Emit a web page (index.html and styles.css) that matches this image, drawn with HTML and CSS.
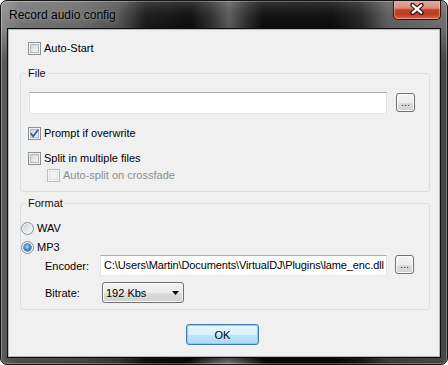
FILE: index.html
```html
<!DOCTYPE html>
<html>
<head>
<meta charset="utf-8">
<title>Record audio config</title>
<link rel="stylesheet" href="styles.css">
</head>
<body>
<div class="window">
  <div class="titlebar">
    <span class="title">Record audio config</span>
    <div class="close">
      <svg width="14" height="12" viewBox="0 0 14 12">
        <path d="M2.5 2 L11.5 10 M11.5 2 L2.5 10" stroke="#3a1208" stroke-width="4.4" stroke-linecap="round" fill="none"/>
        <path d="M2.8 2.3 L11.2 9.7 M11.2 2.3 L2.8 9.7" stroke="#ffffff" stroke-width="2.4" stroke-linecap="round" fill="none"/>
      </svg>
    </div>
  </div>
  <div class="client">
    <label class="check row-autostart"><span class="cb"></span><span>Auto-Start</span></label>

    <fieldset class="group group-file">
      <legend>File</legend>
      <div class="file-row">
        <div class="textbox file-box"></div>
        <button class="dots">...</button>
      </div>
      <label class="check row-prompt"><span class="cb"><svg width="11" height="11" viewBox="0 0 11 11"><path d="M1.8 5.2 L4.2 8.2 L9.2 1.8" stroke="#3b5ba6" stroke-width="1.8" fill="none"/></svg></span><span>Prompt if overwrite</span></label>
      <label class="check row-split"><span class="cb"></span><span>Split in multiple files</span></label>
      <label class="check row-auto disabled"><span class="cb dis"></span><span>Auto-split on crossfade</span></label>
    </fieldset>

    <fieldset class="group group-format">
      <legend>Format</legend>
      <label class="check row-wav"><span class="rb"></span><span>WAV</span></label>
      <label class="check row-mp3"><span class="rb on"></span><span>MP3</span></label>
      <div class="field-row enc-row">
        <span class="field-label">Encoder:</span>
        <div class="textbox enc-box">C:\Users\Martin\Documents\VirtualDJ\Plugins\lame_enc.dll</div>
        <button class="dots">...</button>
      </div>
      <div class="field-row bit-row">
        <span class="field-label">Bitrate:</span>
        <div class="combo"><span>192 Kbs</span><svg width="7" height="4" viewBox="0 0 7 4"><polygon points="0,0 7,0 3.5,4" fill="#000"/></svg></div>
      </div>
    </fieldset>

    <div class="actions"><button class="ok">OK</button></div>
  </div>
</div>
</body>
</html>
```

FILE: styles.css
```css
* { box-sizing: border-box; }
html, body { margin: 0; padding: 0; background: #ffffff; }
body {
  width: 448px;
  height: 365px;
  overflow: hidden;
  font-family: "Liberation Sans", Arial, sans-serif;
  font-size: 11px;
  color: #000;
}

.window {
  width: 448px;
  height: 365px;
  border: 1px solid #161616;
  border-radius: 7px;
  overflow: hidden;
  display: flex;
  flex-direction: column;
  background-color: #1a1a1a;
  background-image:
    radial-gradient(ellipse 45px 9px at 224px 364px, rgba(255,255,255,0.35), rgba(255,255,255,0)),
    linear-gradient(180deg, rgba(255,255,255,0.16) 0, rgba(255,255,255,0.04) 14px, rgba(0,0,0,0) 28px, rgba(0,0,0,0.35) 60px, rgba(0,0,0,0.35) 100%),
    linear-gradient(90deg, #8c8c8c 0, #747474 18px, #686868 80px, #505050 118px, #171717 145px, #0b0b0b 190px, #2c2c2c 210px, #585858 228px, #2a2a2a 246px, #0a0a0a 262px, #090909 330px, #222 360px, #5a5a5a 386px, #6e6e6e 448px);
  box-shadow: inset 0 0 0 1px rgba(255,255,255,0.28);
}

.titlebar {
  height: 28px;
  flex: none;
  display: flex;
  justify-content: space-between;
  align-items: flex-start;
}
.title {
  font-size: 12px;
  line-height: 14px;
  margin: 7px 0 0 8px;
  color: #000;
  text-shadow: 0 0 4px rgba(200,200,200,0.6), 0 0 10px rgba(190,190,190,0.5);
}
.close {
  width: 48px;
  height: 20px;
  margin: -1px 6px 0 0;
  border: 1px solid #3b1008;
  border-top: none;
  border-radius: 0 0 5px 5px;
  background: linear-gradient(180deg, #e9ada1 0%, #d88f7e 42%, #c4432a 52%, #bb3b22 75%, #d8694c 100%);
  box-shadow: inset 0 0 0 1px rgba(255,220,210,0.45);
  display: flex;
  align-items: center;
  justify-content: center;
}
.close svg { display: block; margin-top: -1px; }

.client {
  flex: none;
  height: 328px;
  margin: 0 7px;
  background: #f0f0f0;
  border: 1px solid #b5b9bd;
  box-shadow: 0 0 0 1px #0c0c0c;
  padding: 0 9px 0 11px;
  display: flex;
  flex-direction: column;
}

/* check boxes and radios */
.check {
  display: flex;
  align-items: center;
  gap: 3px;
  height: 13px;
  line-height: 13px;
  white-space: nowrap;
}
.cb {
  width: 13px;
  height: 13px;
  flex: none;
  border: 1px solid #8e8f8f;
  background: linear-gradient(135deg, #c8ccd2 0%, #e6e8ea 55%, #f7f7f7 100%);
  box-shadow: inset 0 0 0 1px #f4f4f4, inset 0 0 0 2px #b2b7bc;
}
.cb svg { display: block; }
.cb.dis {
  border-color: #bcbcbc;
  background: #f3f3f3;
  box-shadow: inset 0 0 0 1px #f7f7f7, inset 0 0 0 2px #e2e2e2;
}
.disabled { color: #8d8d8d; }

.rb {
  width: 13px;
  height: 13px;
  flex: none;
  border-radius: 50%;
  border: 1px solid #8e8f8f;
  background: linear-gradient(135deg, #c4c8ce 0%, #e8eaec 55%, #fafafa 100%);
  box-shadow: inset 0 0 0 1px #f4f4f4;
  position: relative;
}
.rb.on::after {
  content: "";
  position: absolute;
  left: 2px;
  top: 2px;
  width: 7px;
  height: 7px;
  border-radius: 50%;
  background: radial-gradient(circle at 45% 40%, #a8e2ff 0, #3f93dc 45%, #1c4a8c 100%);
  box-shadow: 0 0 0 0.5px #1b3f73;
}

.row-autostart { margin: 12px 0 0 8px; }

/* group boxes */
.group {
  margin: 11px 0 0 0;
  padding: 0 0 9px 0;
  border: 1px solid #d5dfe5;
  border-radius: 3px;
  min-width: 0;
}
.group legend {
  margin-left: 5px;
  padding: 0 2px;
  line-height: 14px;
  font-size: 11px;
  color: #111;
}
.group-format {
  margin-top: 4px;
  padding-bottom: 6px;
}

.textbox {
  background: #fff;
  border: 1px solid;
  border-color: #abadb3 #dbdfe6 #e3e9ef #e2e3ea;
  overflow: hidden;
  white-space: nowrap;
}

.dots {
  width: 19px;
  height: 19px;
  flex: none;
  padding: 0 0 3px 0;
  margin: 0;
  border: 1px solid #707070;
  border-radius: 3px;
  background: linear-gradient(180deg, #f4f4f4 0%, #ececec 50%, #dedede 52%, #d2d2d2 100%);
  box-shadow: inset 0 0 0 1px #fbfbfb;
  font-family: "Liberation Sans", Arial, sans-serif;
  font-size: 11px;
  line-height: 11px;
  color: #2b2470;
  display: flex;
  align-items: flex-end;
  justify-content: center;
}

.file-row {
  display: flex;
  align-items: flex-start;
  gap: 9px;
  margin: 12px 0 0 8px;
}
.file-box { width: 358px; height: 22px; }
.file-row .dots { margin-top: 1px; }

.row-prompt { margin: 13px 0 0 7px; }
.row-split { margin: 12px 0 0 7px; }
.row-auto { margin: 4px 0 0 26px; }

.row-wav { margin: 12px 0 0 0; }
.row-mp3 { margin: 6px 0 0 0; }

.field-row {
  display: flex;
  align-items: center;
  margin-left: 24px;
}
.field-label { width: 55px; flex: none; }
.enc-row { margin-top: 1px; }
.enc-box {
  width: 287px;
  height: 21px;
  padding: 0 0 0 3px;
  line-height: 19px;
  letter-spacing: -0.12px;
}
.enc-row .dots { align-self: flex-start; margin-left: 8px; }

.bit-row { margin-top: 6px; }
.combo {
  width: 82px;
  height: 21px;
  margin-left: 2px;
  border: 1px solid #707070;
  border-radius: 3px;
  background: linear-gradient(180deg, #f2f2f2 0%, #ebebeb 50%, #dddddd 52%, #d0d0d0 100%);
  box-shadow: inset 0 0 0 1px #fafafa;
  display: flex;
  align-items: center;
  justify-content: space-between;
  padding: 0 4px 0 3px;
}
.combo svg { display: block; }

.actions {
  display: flex;
  justify-content: center;
  padding-right: 5px;
  margin-top: 14px;
}
.ok {
  width: 73px;
  height: 21px;
  margin: 0;
  padding: 0;
  border: 1px solid #3c7fb1;
  border-radius: 3px;
  background: linear-gradient(180deg, #eaf6fd 0%, #d9f0fc 50%, #bee6fd 52%, #a7d9f5 100%);
  box-shadow: inset 0 0 0 1px #7fd3f7;
  font-family: "Liberation Sans", Arial, sans-serif;
  font-size: 11px;
  color: #000;
}
```
